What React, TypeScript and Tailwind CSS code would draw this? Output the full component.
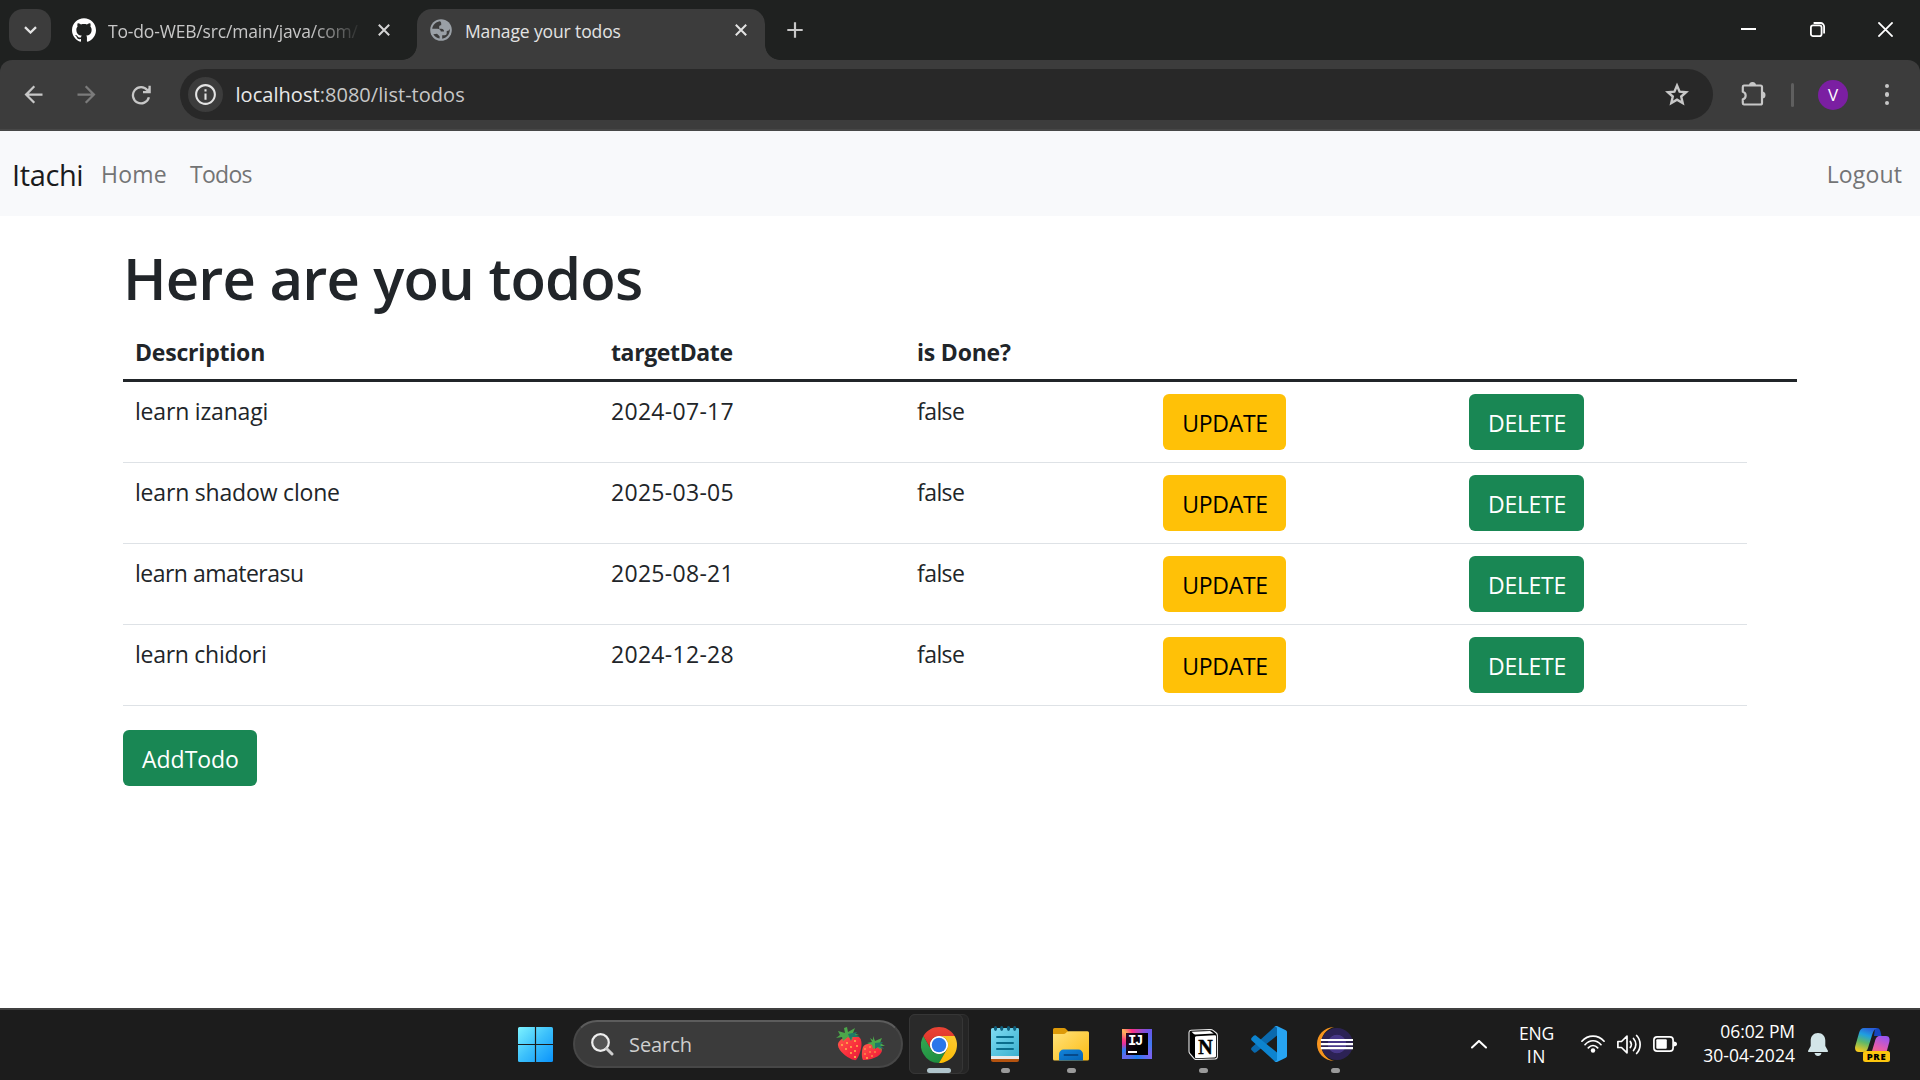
import type { ReactNode } from "react";
import { SiGithub } from "react-icons/si";
import { MdArrowBack, MdArrowForward, MdInfoOutline } from "react-icons/md";

type Todo = { description: string; date: string; tracking: string; cell: string };

const todos: Todo[] = [
  { description: "learn izanagi", date: "2024-07-17", tracking: "tracking-[-0.19px]", cell: "false" },
  { description: "learn shadow clone", date: "2025-03-05", tracking: "tracking-[-0.19px]", cell: "false" },
  { description: "learn amaterasu", date: "2025-08-21", tracking: "tracking-[-0.51px]", cell: "false" },
  { description: "learn chidori", date: "2024-12-28", tracking: "tracking-[-0.27px]", cell: "false" },
];

function CloseX({ className }: { className: string }) {
  return (
    <svg className={className} viewBox="0 0 12 12" fill="none" stroke="currentColor" strokeWidth="2">
      <path d="M0.8 0.8L11.2 11.2M11.2 0.8L0.8 11.2" />
    </svg>
  );
}

function Globe() {
  return (
    <svg className="h-[22px] w-[22px]" viewBox="0 0 22 22">
      <circle cx="11" cy="11" r="10.8" fill="#9aa0a6" />
      <path
        d="M9.600 2.200C5.600 3 2.600 6 2.200 9.800H7.500C9.300 9.800 10.600 10.800 10.800 12.400H14C14.300 11.200 13.300 9.900 11.300 9.700H9.200V7.600C9.200 6.500 10.200 6.200 11.200 6.200V4.500C11.200 3.500 10.900 2.500 9.600 2.200Z"
        fill="#3c3c3c"
      />
      <path
        d="M19.600 9.800C19.300 11.300 18.300 12.100 16.700 12V14.300C16.700 15.500 15.900 16.200 14.700 16.200H12.200V19.700C16.500 19 19.800 15.300 19.800 11C19.800 10.600 19.700 10.200 19.600 9.800ZM7 14.700L9.600 17.200V19.600C6.800 19.100 4.500 17.500 3.300 15.200Z"
        fill="#3c3c3c"
      />
    </svg>
  );
}

function TabStrip() {
  return (
    <div className="flex h-[60px] bg-[#1f2120]">
      <div className="ml-[9px] mt-[9px] flex h-[42px] w-[42px] items-center justify-center rounded-[14px] bg-[#3c3c3c]">
        <svg className="h-[8px] w-[13px]" viewBox="0 0 13 8" fill="none" stroke="#e3e3e3" strokeWidth="2.3">
          <path d="M1 1.200L6.500 6.500L12 1.200" />
        </svg>
      </div>
      <div className="ml-[21px] flex h-[60px] w-[345px] items-center text-[#c7c7c7]">
        <SiGithub className="h-6 w-6 shrink-0 text-white" />
        <span className="ml-[12px] mt-[3px] w-[254px] overflow-hidden whitespace-nowrap text-[17.5px] tracking-[-0.17px] mask-r-from-80% mask-r-to-100%">
          To-do-WEB/src/main/java/com/
        </span>
        <CloseX className="ml-[16px] h-3 w-3 text-[#d5d5d5]" />
      </div>
      <div className="relative mt-[9px] flex h-[51px] w-[348px] items-center rounded-t-[15px] bg-[#3c3c3c] pb-[9px]">
        <div className="absolute bottom-0 left-[-15px] h-[15px] w-[15px] bg-[radial-gradient(circle_at_0_0,transparent_14.5px,#3c3c3c_15.2px)]" />
        <div className="absolute bottom-0 right-[-15px] h-[15px] w-[15px] bg-[radial-gradient(circle_at_100%_0,transparent_14.5px,#3c3c3c_15.2px)]" />
        <div className="ml-[13px]">
          <Globe />
        </div>
        <span className="ml-[13px] mt-[2px] w-[270px] whitespace-nowrap text-[17.5px] tracking-[-0.12px] text-[#e3e3e3]">
          Manage your todos
        </span>
        <CloseX className="h-3 w-3 text-[#e3e3e3]" />
      </div>
      <svg className="ml-[22px] mt-[22px] h-4 w-4" viewBox="0 0 16 16" stroke="#c7c7c7" strokeWidth="2.200">
        <path d="M8 0.300V15.700M0.300 8H15.700" />
      </svg>
      <div className="ml-auto flex h-[60px] items-start gap-[53.500px] pr-[27px] pt-[22px]">
        <svg className="h-[15px] w-[15px]" viewBox="0 0 15 15">
          <path d="M0 6h15v2H0z" fill="#fff" />
        </svg>
        <svg className="h-[15px] w-[15px]" viewBox="0 0 15 15" fill="none" stroke="#fff" strokeWidth="1.800">
          <rect x="0.900" y="3.400" width="10.700" height="10.700" rx="2.200" />
          <path d="M3.600 1H10.500A3.600 3.600 0 0 1 14.100 4.600V11.500" />
        </svg>
        <svg className="h-[15px] w-[15px]" viewBox="0 0 15 15" stroke="#fff" strokeWidth="1.800">
          <path d="M0.400 0.400L14.600 14.600M14.600 0.400L0.400 14.600" />
        </svg>
      </div>
    </div>
  );
}

function Toolbar() {
  return (
    <div className="bg-[#1f2120]">
      <div className="flex h-[71px] items-center rounded-t-[12px] border-b-2 border-[#474747] bg-[#3c3c3c]">
        <MdArrowBack className="ml-[19.500px] h-[27px] w-[27px] text-[#c7c7c7]" />
        <MdArrowForward className="ml-[26.500px] h-[27px] w-[27px] text-[#7b7b7b]" />
        <svg className="ml-[31px] h-5 w-5" viewBox="0 0 20 20" fill="none" stroke="#c7c7c7" strokeWidth="2.300">
          <path d="M16.400 5.200A8.100 8.100 0 1 0 17.900 12.300" />
          <path d="M18.600 0.800V7.200H12" />
          <path d="M14.600 6.500L18 3V6.500Z" fill="#c7c7c7" stroke="none" />
        </svg>
        <div className="ml-[29px] flex h-[51px] w-[1533px] items-center rounded-full bg-[#282828]">
          <div className="ml-[8px] flex h-[35px] w-[35px] items-center justify-center rounded-full bg-[#3c3c3c]">
            <MdInfoOutline className="h-[25px] w-[25px] text-[#e3e3e3]" />
          </div>
          <span className="ml-[12.500px] text-[20px] tracking-[0.040px] text-[#c7c7c7]">
            <span className="text-[#e8e8e8]">localhost</span>:8080/list-todos
          </span>
          <svg className="ml-auto mr-[23px] h-[26px] w-[26px]" viewBox="0 0 26 26" fill="none" stroke="#c7c7c7" strokeWidth="2.400">
            <path d="M13 3.500L15.600 9.600L22.100 10.200L17.200 14.500L18.700 21L13 17.600L7.300 21L8.800 14.500L3.900 10.200L10.400 9.600Z" />
          </svg>
        </div>
        <svg className="ml-[28px] h-[26px] w-[26px]" viewBox="0 0 26 26" fill="none" stroke="#c7c7c7" strokeWidth="2.200" strokeLinejoin="round">
          <path d="M3 3.500H19.500A1.500 1.500 0 0 1 21 5V21A1.500 1.500 0 0 1 19.500 22.500H3A1.500 1.500 0 0 1 1.800 21V17.300C5.600 16.500 5.600 10.700 1.800 9.800V5A1.500 1.500 0 0 1 3 3.500Z" />
          <path d="M8 3.500A3.500 3.500 0 0 1 15 3.500ZM21 9.500A3.500 3.500 0 0 1 21 16.500Z" fill="#c7c7c7" stroke="none" />
        </svg>
        <div className="ml-[24px] h-6 w-[3px] rounded-full bg-[#5f5f5f]" />
        <div className="ml-[24px] flex h-[30px] w-[30px] items-center justify-center rounded-full bg-[#7b1fa2] text-[17px] text-white">
          V
        </div>
        <div className="ml-[36.500px] flex flex-col gap-[4px]">
          <div className="h-[4.500px] w-[4.500px] rounded-full bg-[#c7c7c7]" />
          <div className="h-[4.500px] w-[4.500px] rounded-full bg-[#c7c7c7]" />
          <div className="h-[4.500px] w-[4.500px] rounded-full bg-[#c7c7c7]" />
        </div>
      </div>
    </div>
  );
}

function Button({ children, className }: { children: ReactNode; className: string }) {
  return (
    <button className={"block h-14 rounded-[6px] pl-px pt-[2px] text-center text-[23px] leading-[54px] " + className}>
      {children}
    </button>
  );
}

function Page() {
  return (
    <div className="h-[877px] bg-white text-[#212529]">
      <nav className="flex h-[85px] items-center bg-[#f8f9fb] pl-[12px] pr-[18px] pt-[2px] text-[23px] text-[#737475]">
        <span className="w-[89px] text-[29px] tracking-[-0.39px] text-[#1a1b1c]">Itachi</span>
        <span className="w-[89px] tracking-[0.2px]">Home</span>
        <span className="tracking-[-0.73px]">Todos</span>
        <span className="ml-auto tracking-[0.15px]">Logout</span>
      </nav>
      <main className="ml-[123px] w-[1674px]">
        <h1 className="pt-[26px] text-[58px] font-semibold leading-[72px] tracking-[-0.82px]">Here are you todos</h1>
        <table className="mt-[12px] w-[1674px] table-fixed border-separate border-spacing-0 text-left text-[23px] leading-9">
          <colgroup>
            <col className="w-[476px]" />
            <col className="w-[306px]" />
            <col className="w-[246px]" />
            <col className="w-[306px]" />
            <col className="w-[290px]" />
            <col className="w-[50px]" />
          </colgroup>
          <thead>
            <tr className="h-14 align-top font-bold">
              <th className="border-b-3 border-[#212529] pl-[12px] pt-[8px] tracking-[-0.2px]">Description</th>
              <th className="border-b-3 border-[#212529] pl-[12px] pt-[8px] tracking-[-0.37px]">targetDate</th>
              <th className="border-b-3 border-[#212529] pl-[12px] pt-[8px] tracking-[-0.2px]">is Done?</th>
              <th className="border-b-3 border-[#212529]" />
              <th className="border-b-3 border-[#212529]" />
              <th className="border-b-3 border-[#212529]" />
            </tr>
          </thead>
          <tbody>
            {todos.map((t) => (
              <tr key={t.description} className="h-[81px] align-top">
                <td className={"border-b border-[#dee2e6] pl-[12px] pt-[11px] " + t.tracking}>{t.description}</td>
                <td className="border-b border-[#dee2e6] pl-[12px] pt-[11px] tracking-[0.3px]">{t.date}</td>
                <td className="border-b border-[#dee2e6] pl-[12px] pt-[11px] tracking-[-0.57px]">{t.cell}</td>
                <td className="border-b border-[#dee2e6] pl-[12px] pt-[12px]">
                  <Button className="w-[123px] bg-[#ffc107] tracking-[-0.3px] text-black">UPDATE</Button>
                </td>
                <td className="border-b border-[#dee2e6] pl-[12px] pt-[12px]">
                  <Button className="w-[115px] bg-[#198754] tracking-[-0.28px] text-white">DELETE</Button>
                </td>
              </tr>
            ))}
          </tbody>
        </table>
        <Button className="mt-6 w-[134px] bg-[#198754] tracking-[-0.04px] text-white">AddTodo</Button>
      </main>
    </div>
  );
}

function Strawberries() {
  return (
    <svg className="h-[34px] w-[49px]" viewBox="0 0 49 34">
      <defs>
        <linearGradient id="berry" x1="0" y1="0" x2="1" y2="1">
          <stop offset="0" stopColor="#ff5a4a" />
          <stop offset="0.600" stopColor="#f92c3c" />
          <stop offset="1" stopColor="#e2203c" />
        </linearGradient>
      </defs>
      <path d="M2 17C3 10 20 6 24 11C28 17 23 30 20 33C17 34.500 1 25 2 17Z" fill="url(#berry)" />
      <path d="M27 20C30 14 43 17 46 22C47 27 39 33 27 33C25.500 31 25.500 24 27 20Z" fill="url(#berry)" />
      <path d="M8 1L11 0L12 5L19 1L17 6L23 8L17 9L16 13L12 10L7 14L6 10L0 11L4 8L2 4L9 6Z" fill="#4ca84a" />
      <path d="M12 7L21 5L19 8L24 10L16 10L15 14Z" fill="#1f7a68" />
      <path d="M37 9L39 14L46 11L44 16L49 19L44 19L46 24L41 20L37 22L36 18L31 16L36 15L34 11L37 13Z" fill="#4ca84a" />
      <path d="M39 16L47 15L44 18L48 22L42 20L39 22Z" fill="#1f7a68" />
      <g fill="#ffc44d">
        <circle cx="6" cy="18" r="0.900" /><circle cx="11" cy="16" r="0.900" /><circle cx="19" cy="14" r="0.900" />
        <circle cx="10" cy="22" r="0.900" /><circle cx="15" cy="20" r="0.900" /><circle cx="21" cy="19" r="0.900" />
        <circle cx="15" cy="26" r="0.900" /><circle cx="19" cy="24" r="0.900" /><circle cx="19" cy="30" r="1.100" />
        <circle cx="29" cy="22" r="0.800" /><circle cx="34" cy="20" r="0.800" /><circle cx="29" cy="27" r="0.800" />
        <circle cx="34" cy="25" r="0.800" /><circle cx="39" cy="25" r="0.800" /><circle cx="31" cy="31" r="0.900" />
        <circle cx="36" cy="29" r="0.800" />
      </g>
    </svg>
  );
}

function WindowsLogo() {
  return (
    <svg className="h-[35px] w-[35px]" viewBox="0 0 35 35">
      <defs>
        <linearGradient id="win" gradientUnits="userSpaceOnUse" x1="0" y1="0" x2="35" y2="35">
          <stop offset="0" stopColor="#7df3ff" />
          <stop offset="0.500" stopColor="#3cc0fb" />
          <stop offset="1" stopColor="#0a93fb" />
        </linearGradient>
      </defs>
      <g fill="url(#win)">
        <path d="M1.500 0H16.900V16.900H0V1.500A1.500 1.500 0 0 1 1.500 0Z" />
        <path d="M18.100 0H33.500A1.500 1.500 0 0 1 35 1.500V16.900H18.100Z" />
        <path d="M0 18.100H16.900V35H1.500A1.500 1.500 0 0 1 0 33.500Z" />
        <path d="M18.100 18.100H35V33.500A1.500 1.500 0 0 1 33.500 35H18.100Z" />
      </g>
    </svg>
  );
}

function ChromeLogo() {
  return (
    <svg className="h-9 w-9 shrink-0" viewBox="0 0 48 48">
      <defs>
        <linearGradient id="cr" x1="0" y1="0" x2="0" y2="1"><stop offset="0" stopColor="#ea4335" /><stop offset="1" stopColor="#d93025" /></linearGradient>
        <linearGradient id="cy" x1="1" y1="0" x2="0.500" y2="1"><stop offset="0" stopColor="#fcc934" /><stop offset="1" stopColor="#fbbc04" /></linearGradient>
        <linearGradient id="cg" x1="0" y1="0" x2="0.600" y2="1"><stop offset="0" stopColor="#34a853" /><stop offset="1" stopColor="#1e8e3e" /></linearGradient>
      </defs>
      <circle cx="24" cy="24" r="12" fill="#fff" />
      <path d="M3.215 36A24 24 0 0 0 24.009 48L34.397 30.007A12 12 0 0 1 13.610 30.003L3.218 12.006A24 24 0 0 0 3.215 36Z" fill="url(#cg)" />
      <path d="M24.009 48A24 24 0 0 0 44.780 12.003L24.002 12A12 12 0 0 1 34.397 30.007Z" fill="url(#cy)" />
      <path d="M3.218 12.006L13.610 30.003A12 12 0 0 1 24.002 12H44.780A24 24 0 0 0 3.218 12.006Z" fill="url(#cr)" />
      <circle cx="24" cy="24" r="11.900" fill="#fff" />
      <circle cx="24" cy="24" r="9.700" fill="#2a76ea" />
    </svg>
  );
}

function NotepadLogo() {
  return (
    <svg className="h-9 w-[28px]" viewBox="0 0 28 36">
      <defs>
        <linearGradient id="np" x1="0" y1="0" x2="1" y2="1"><stop offset="0" stopColor="#7fdcf2" /><stop offset="1" stopColor="#3bb0cf" /></linearGradient>
      </defs>
      <path d="M0 29H28V34A2 2 0 0 1 26 36H2A2 2 0 0 1 0 34Z" fill="#b5530f" />
      <path d="M0 27H28V33H0Z" fill="#e9e9e9" />
      <path d="M1.500 2H26.500A1.500 1.500 0 0 1 28 3.500V30H0V3.500A1.500 1.500 0 0 1 1.500 2Z" fill="url(#np)" />
      <g fill="#0f5f7c">
        <ellipse cx="4.500" cy="2.500" rx="1.600" ry="2.400" /><ellipse cx="10.700" cy="2.500" rx="1.600" ry="2.400" />
        <ellipse cx="17.500" cy="2.500" rx="1.600" ry="2.400" /><ellipse cx="23.700" cy="2.500" rx="1.600" ry="2.400" />
      </g>
      <path d="M6 11H22M6 17H22M6 23H22" stroke="#0a6d8c" strokeWidth="2" strokeLinecap="round" />
    </svg>
  );
}

function FolderLogo() {
  return (
    <svg className="h-9 w-9" viewBox="0 0 36 36">
      <defs>
        <linearGradient id="fo" x1="0" y1="0" x2="1" y2="1"><stop offset="0" stopColor="#ffe27a" /><stop offset="1" stopColor="#fcbc14" /></linearGradient>
        <linearGradient id="fb" x1="0" y1="0" x2="1" y2="1"><stop offset="0" stopColor="#1384db" /><stop offset="1" stopColor="#0563b4" /></linearGradient>
      </defs>
      <path d="M0 3.500A1.500 1.500 0 0 1 1.500 2H11C12.500 2 13 3 15 5V12H0Z" fill="#dd9a09" />
      <path d="M0 8H11C13 8 13.500 5.300 15.500 5.300H34.500A1.500 1.500 0 0 1 36 6.800V33A1.500 1.500 0 0 1 34.500 34.500H1.500A1.500 1.500 0 0 1 0 33Z" fill="url(#fo)" />
      <path d="M6 34.500V28A4.500 4.500 0 0 1 10.500 23.600H25.500A4.500 4.500 0 0 1 30 28V34.500Z" fill="url(#fb)" />
      <path d="M11.500 29H24.500" stroke="#06498a" strokeWidth="1.800" strokeLinecap="round" />
    </svg>
  );
}

function IntellijLogo() {
  return (
    <div className="h-[30px] w-[30px] bg-[conic-gradient(from_0deg,#c63fae,#6a55e8_12%,#3f7bf2_25%,#7b62f0_36%,#1f7df0_50%,#6a66e8_62%,#2a80f5_68%,#e22fa0_75%,#ff3f7c_80%,#ffb45a_87%,#ff2e84_94%,#c63fae)] p-[4px]">
      <div className="flex h-[22px] w-[22px] flex-col bg-[linear-gradient(120deg,#2c0625,#000_60%)] pl-[2px] pt-[1px] text-white">
        <span className="font-['Liberation_Mono'] text-[14px] font-bold leading-[14px] tracking-[-1.500px]">IJ</span>
        <span className="mt-[3px] h-[1.500px] w-[9px] bg-white" />
      </div>
    </div>
  );
}

function NotionLogo() {
  return (
    <svg className="h-[31px] w-[30px]" viewBox="0 0 30 31">
      <path d="M1 3.500C1 2 1.600 1.400 3 1.300L22 0.500C23.400 0.500 24 0.700 25 1.400L28.300 4C29 4.600 29.400 5.200 29.400 6.500V27.500C29.400 29 28.700 29.800 27.300 29.900L8.500 30.600C7.300 30.600 6.700 30.300 5.900 29.400L1.700 24.400C1.200 23.700 1 23.100 1 22.200Z" fill="#000" stroke="#e8e8e8" strokeWidth="1.100" />
      <path d="M3.500 2.800L22 1.900L25.800 4.400L8 5.600C6.700 5.600 5.900 5 5.300 4.500Z" fill="#fff" />
      <path d="M7 8.700C7 7.800 7.500 7.400 8.300 7.300L26.500 6.300C27.500 6.300 28 6.700 28 7.600V27.100C28 28 27.500 28.500 26.600 28.600L8.600 29.300C7.500 29.300 7 28.800 7 27.900Z" fill="#fff" />
      <text x="17.500" y="24.500" textAnchor="middle" fontFamily="Liberation Serif" fontWeight="700" fontSize="20" stroke="#000" strokeWidth="0.500">N</text>
    </svg>
  );
}

function VsCodeLogo() {
  return (
    <svg className="h-9 w-9" viewBox="0 0 36 36">
      <path d="M26 9.500V0.300C24.700 0.200 23.700 0.600 22.800 1.500L0.700 21.500C-0.100 22.300 -0.100 23.500 0.700 24.300L2.700 26.200C3.400 26.900 4.400 26.900 5.200 26.300Z" fill="#0a69ad" />
      <path d="M26 26.500V35.700C24.700 35.800 23.700 35.400 22.800 34.500L0.700 14.500C-0.100 13.700 -0.100 12.500 0.700 11.700L2.700 9.800C3.400 9.100 4.400 9.100 5.200 9.700Z" fill="#0d84cf" />
      <path d="M26 0L34.800 4.200C35.600 4.600 36 5.200 36 6V30C36 30.800 35.600 31.400 34.800 31.800L26 36C25 36.300 24 36 22.800 34.700C24.500 35.800 26 35 26 33.500V2.500C26 1 24.500 0.200 22.800 1.300C24 0 25 -0.300 26 0Z" fill="#27a4f2" />
    </svg>
  );
}

function EclipseLogo() {
  return (
    <svg className="h-9 w-9" viewBox="0 0 36 36">
      <defs>
        <radialGradient id="ec" cx="0.500" cy="0.500" r="0.500"><stop offset="0" stopColor="#473788" /><stop offset="0.550" stopColor="#473788" /><stop offset="0.600" stopColor="#2c2255" /><stop offset="1" stopColor="#2c2255" /></radialGradient>
      </defs>
      <path d="M17 1C7 1.500 0 9 0 18C0 27 7 34.500 17 35C9 33 4 26 4 18C4 10 9 3 17 1Z" fill="#f7941e" />
      <circle cx="20" cy="18" r="16" fill="url(#ec)" />
      <path d="M3.800 13H36V15.100H3.800ZM3.800 17.100H36V19.200H3.800ZM3.800 21.100H36V23.200H3.800Z" fill="#fff" />
    </svg>
  );
}

function AppCell({ children, running }: { children: ReactNode; running?: boolean }) {
  return (
    <div className="flex w-[66px] flex-col items-center">
      <div className="flex h-[58px] items-center pt-[10px]">{children}</div>
      {running && <div className="h-[5px] w-[9px] rounded-full bg-[#9a9a9a]" />}
    </div>
  );
}

function CopilotLogo() {
  return (
    <div className="relative h-[34px] w-[35px]">
      <svg className="h-[30px] w-[35px]" viewBox="0 0 35 30">
        <defs>
          <linearGradient id="co1" x1="0.600" y1="0" x2="0.300" y2="1"><stop offset="0" stopColor="#2a5fd8" /><stop offset="0.300" stopColor="#1f9fe0" /><stop offset="0.600" stopColor="#5db86a" /><stop offset="1" stopColor="#f5c91e" /></linearGradient>
          <linearGradient id="co2" x1="0.700" y1="0" x2="0.300" y2="1"><stop offset="0" stopColor="#9a55f0" /><stop offset="0.500" stopColor="#e25bb0" /><stop offset="1" stopColor="#ff7a5c" /></linearGradient>
        </defs>
        <path d="M20 0H22C25 0 25.500 3 26.500 8H19Z" fill="#1546c0" />
        <path d="M9 0H22C19 1 18 4 16.500 9L13 20C12 23 10.500 24 8 24H4C0.500 24 -0.500 21 0.300 18L4 5C5 1.500 6.500 0 9 0Z" fill="url(#co1)" />
        <path d="M25 8H31C34.500 8 35 11 34.300 14L31 26C30 29 28 30 25 30H13C15 29.500 16 27 17 23L20 13C21 9.500 22 8 25 8Z" fill="url(#co2)" />
      </svg>
      <span className="absolute left-[8px] top-[23px] h-[11px] w-[27px] rounded-[2.500px] bg-[#fcc60f] text-center text-[9.500px] font-extrabold leading-[11px] tracking-[0.600px] text-black">
        PRE
      </span>
    </div>
  );
}

function Taskbar() {
  return (
    <div className="flex h-[72px] border-t-2 border-[#404040] bg-[#1c1c1c] text-white">
      <div className="ml-[502px] flex w-[66px] justify-center pt-[17px]">
        <WindowsLogo />
      </div>
      <div className="ml-[5px] mt-[10px] flex h-12 w-[330px] items-center rounded-full border-2 border-[#474747] border-t-[#5c5c5c] bg-[#3b3b3b]">
        <svg className="ml-[16px] h-[23px] w-[23px]" viewBox="0 0 23 23" fill="none">
          <circle cx="9.500" cy="9.500" r="8.300" fill="#555" stroke="#eee" strokeWidth="2.200" />
          <path d="M15.500 15.500L21 21" stroke="#cfcfcf" strokeWidth="3" strokeLinecap="round" />
        </svg>
        <span className="ml-[15px] mt-px text-[20px] tracking-[-0.07px] text-[#cfcfcf]">Search</span>
        <div className="ml-auto mr-[16px]">
          <Strawberries />
        </div>
      </div>
      <div className="ml-[3px] flex w-[66px] pl-[3px]">
        <div className="mt-[4px] h-[60px] w-[60px] rounded-[6px] border border-[#303030] bg-[#252525]">
          <div className="-ml-px -mt-px flex h-[60px] w-[54px] flex-col items-center rounded-[6px] border border-[#363636] bg-[#2a2a2a] pl-[6px]">
            <div className="flex h-[53px] shrink-0 items-center pt-[7px]">
              <ChromeLogo />
            </div>
            <div className="h-[5px] w-6 shrink-0 rounded-full bg-[#b0c5cc]" />
          </div>
        </div>
      </div>
      <AppCell running><NotepadLogo /></AppCell>
      <AppCell running><FolderLogo /></AppCell>
      <AppCell><IntellijLogo /></AppCell>
      <AppCell running><NotionLogo /></AppCell>
      <AppCell><VsCodeLogo /></AppCell>
      <AppCell running><EclipseLogo /></AppCell>
      <div className="ml-[87px] flex h-[68px] items-center">
        <div className="flex w-12 justify-center">
          <svg className="h-[9px] w-4" viewBox="0 0 16 9" fill="none" stroke="#fff" strokeWidth="2" strokeLinecap="round">
            <path d="M1 7.500L8 0.900L15 7.500" />
          </svg>
        </div>
        <div className="flex w-[67px] flex-col items-center pt-[1px] text-[17.500px] leading-[23px]">
          <span className="tracking-[-0.150px]">ENG</span>
          <span className="tracking-[0.600px]">IN</span>
        </div>
        <div className="ml-[11px] flex items-center gap-[12px]">
          <svg className="h-[18px] w-6" viewBox="0 0 24 18" fill="none" stroke="#fff" strokeWidth="1.700" strokeLinecap="round">
            <path d="M0.900 6.200C7 -0.700 17 -0.700 23.100 6.200" />
            <path d="M4 9.700C8.500 4.400 15.500 4.400 20 9.700" />
            <path d="M7.300 12.900C10 9.700 14 9.700 16.700 12.900" />
            <circle cx="12" cy="15.500" r="2.200" fill="#fff" stroke="none" />
          </svg>
          <svg className="h-[21px] w-6" viewBox="0 0 24 21" fill="none" stroke="#fff" strokeWidth="1.700" strokeLinecap="round" strokeLinejoin="round">
            <path d="M0.900 7.500H4.500L10 2.200V18.800L4.500 13.500H0.900Z" />
            <path d="M13.300 7.500C14.600 9.300 14.600 11.700 13.300 13.500M16.500 4.500C19.600 8 19.600 13 16.500 16.500M19.600 1.500C24.300 6.500 24.300 14.500 19.600 19.500" />
          </svg>
          <svg className="h-4 w-6" viewBox="0 0 24 16" fill="none">
            <rect x="0.900" y="0.900" width="19.200" height="14.200" rx="3.200" stroke="#fff" strokeWidth="1.700" />
            <rect x="3.300" y="3.300" width="10.500" height="9.400" rx="1" fill="#fff" />
            <path d="M20.500 5.500C23 5.500 24 6.500 24 8C24 9.500 23 10.500 20.500 10.500Z" fill="#fff" />
          </svg>
        </div>
        <div className="flex w-[118px] flex-col items-end pb-[2px] text-[17.500px] leading-6">
          <span className="tracking-[-0.100px]">06:02 PM</span>
          <span className="tracking-[0.050px]">30-04-2024</span>
        </div>
        <div className="flex w-[46px] justify-center">
          <svg className="h-[23px] w-5" viewBox="0 0 20 23" fill="#d3e5e8">
            <path d="M10 0C14.500 0 17.300 3.300 17.300 7.500V13L19.800 17.500C20.200 18.500 19.700 19 19 19H1C0.300 19 -0.200 18.500 0.200 17.500L2.700 13V7.500C2.700 3.300 5.500 0 10 0Z" />
            <path d="M6.500 20H13.500C13 22 11.800 23 10 23C8.200 23 7 22 6.500 20Z" />
          </svg>
        </div>
        <div className="flex w-[63px] justify-center pt-[2px]">
          <CopilotLogo />
        </div>
      </div>
    </div>
  );
}

export default function App() {
  return (
    <div className="flex h-[1080px] w-[1920px] flex-col overflow-hidden font-['Open_Sans','Noto_Sans',sans-serif]">
      <TabStrip />
      <Toolbar />
      <Page />
      <Taskbar />
    </div>
  );
}
